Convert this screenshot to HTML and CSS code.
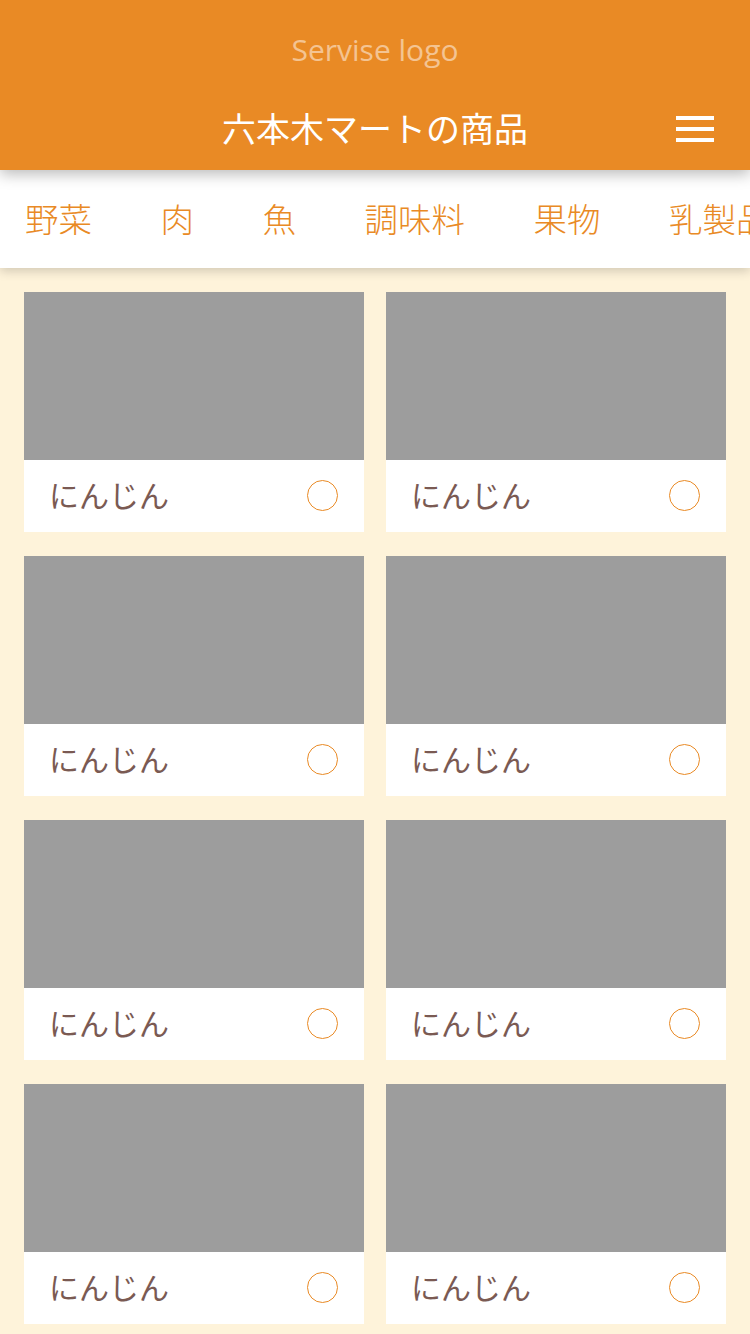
FILE: index.html
```html
<!DOCTYPE html>
<html lang="ja">
<head>
<meta charset="utf-8">
<title>六本木マートの商品</title>
<link rel="stylesheet" href="styles.css">
</head>
<body>
<header class="header">
  <div class="logo">Servise logo</div>
  <div class="title-row">
    <span class="spacer"></span>
    <h1 class="title">六本木マートの商品</h1>
    <span class="menu-wrap"><span class="menu"><i></i><i></i><i></i></span></span>
  </div>
</header>
<nav class="tabs">
  <span class="tab">野菜</span>
  <span class="tab">肉</span>
  <span class="tab">魚</span>
  <span class="tab">調味料</span>
  <span class="tab">果物</span>
  <span class="tab">乳製品</span>
</nav>
<main class="grid">
  <div class="card"><div class="thumb"></div><div class="info"><span class="name">にんじん</span><span class="check"></span></div></div>
  <div class="card"><div class="thumb"></div><div class="info"><span class="name">にんじん</span><span class="check"></span></div></div>
  <div class="card"><div class="thumb"></div><div class="info"><span class="name">にんじん</span><span class="check"></span></div></div>
  <div class="card"><div class="thumb"></div><div class="info"><span class="name">にんじん</span><span class="check"></span></div></div>
  <div class="card"><div class="thumb"></div><div class="info"><span class="name">にんじん</span><span class="check"></span></div></div>
  <div class="card"><div class="thumb"></div><div class="info"><span class="name">にんじん</span><span class="check"></span></div></div>
  <div class="card"><div class="thumb"></div><div class="info"><span class="name">にんじん</span><span class="check"></span></div></div>
  <div class="card"><div class="thumb"></div><div class="info"><span class="name">にんじん</span><span class="check"></span></div></div>
</main>
</body>
</html>
```
FILE: styles.css
```css
* { box-sizing: border-box; }
html, body { margin: 0; padding: 0; }
body {
  width: 750px;
  height: 1334px;
  overflow: hidden;
  background: #fef3da;
  font-family: "Noto Sans CJK JP", "Noto Sans", sans-serif;
}
.header {
  position: relative;
  z-index: 2;
  height: 170px;
  background: #e98a25;
  padding-top: 30px;
  box-shadow: 0 4px 14px rgba(0,0,0,0.28);
}
.logo {
  text-align: center;
  font-family: "Open Sans", "Noto Sans", sans-serif;
  font-size: 30px;
  line-height: 40px;
  color: rgba(255,255,255,0.5);
}
.title-row {
  margin-top: 34px;
  display: grid;
  grid-template-columns: 1fr auto 1fr;
  align-items: center;
  height: 48px;
}
.title {
  margin: 0;
  font-weight: 400;
  font-size: 34px;
  line-height: 48px;
  color: #fff;
  letter-spacing: 0;
}
.menu-wrap {
  display: flex;
  justify-content: flex-end;
  padding-right: 36px;
}
.menu {
  display: flex;
  flex-direction: column;
  gap: 7px;
  width: 38px;
  padding-top: 1px;
}
.menu i {
  display: block;
  height: 4px;
  background: #fff;
}
.tabs {
  position: relative;
  z-index: 1;
  height: 98px;
  background: #fff;
  display: flex;
  align-items: center;
  gap: 68.5px;
  padding-left: 25px;
  white-space: nowrap;
  overflow: hidden;
  box-shadow: 0 3px 10px rgba(0,0,0,0.18);
}
.tab {
  flex: none;
  font-size: 33.5px;
  font-weight: 300;
  line-height: 48px;
  color: #e98a25;
  padding-bottom: 2px;
}
.grid {
  display: grid;
  grid-template-columns: 340px 340px;
  column-gap: 22px;
  row-gap: 24px;
  padding: 24px 24px 0;
}
.card {
  background: #fff;
}
.thumb {
  height: 168px;
  background: #9d9d9d;
}
.info {
  height: 72px;
  display: flex;
  align-items: center;
  justify-content: space-between;
  padding: 0 26px 4px 25px;
}
.name {
  font-size: 30px;
  color: #7a5a53;
  line-height: 40px;
}
.check {
  width: 31px;
  height: 31px;
  margin-top: 2px;
  border: 1.5px solid #e98a25;
  border-radius: 50%;
}
```
